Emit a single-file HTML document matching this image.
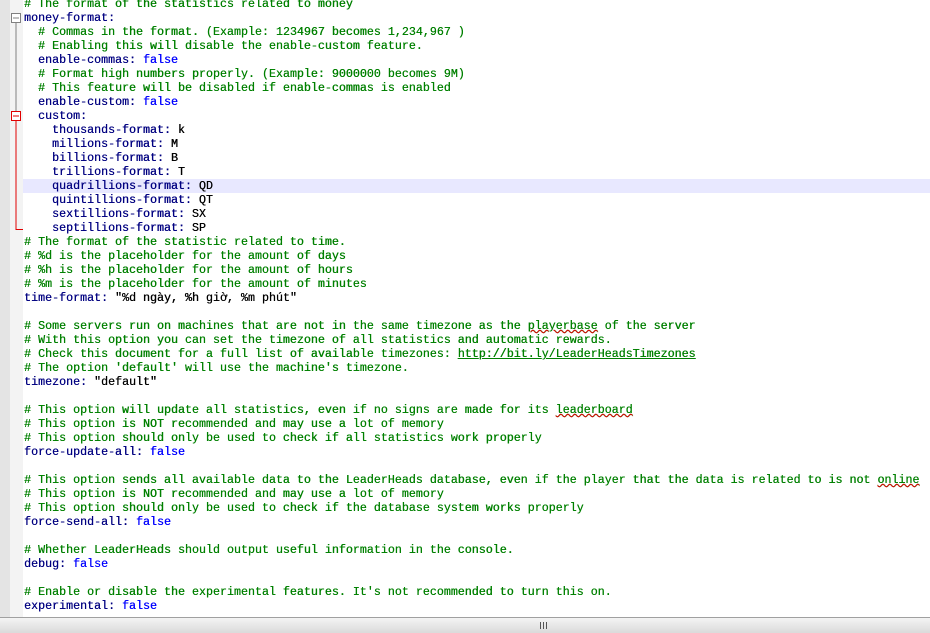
<!DOCTYPE html>
<html><head><meta charset="utf-8"><style>
html,body{margin:0;padding:0;width:930px;height:633px;overflow:hidden;background:#fff;}
.gut{position:absolute;left:0;top:0;width:10px;height:618px;background:#e4e4e4;}
.fold{position:absolute;left:10px;top:0;width:13px;height:618px;background:#f3f3f3;}
.hl{position:absolute;left:23px;top:179px;width:907px;height:14px;background:#e8e8ff;}
pre{position:absolute;left:24px;top:-3px;margin:0;font-family:"Liberation Mono",monospace;font-size:11.67px;line-height:14px;color:#000;text-shadow:0.3px 0 0 currentColor;}
.c{color:#008000}.k{color:#000080}.b{color:#0000ff}
.u{text-decoration:underline}
.w{text-decoration:underline wavy #e00000;text-decoration-thickness:1px;text-underline-offset:0px}
.sb{position:absolute;left:0;top:617px;width:930px;height:16px;background:linear-gradient(#f4f4f4,#dadada);border-top:1px solid #a0a0a0;box-sizing:border-box;}
.grip{position:absolute;left:540px;top:4px;width:8px;height:7px;background:repeating-linear-gradient(90deg,#555 0 1px,transparent 1px 3px);}
</style></head><body>
<div class="gut"></div><div class="fold"></div>
<div class="hl"></div>
<svg style="position:absolute;left:0;top:0" width="30" height="240">
<rect x="11.5" y="13.5" width="9" height="9" fill="#fff" stroke="#808080"/>
<line x1="13" y1="18" x2="19" y2="18" stroke="#808080"/>
<line x1="16" y1="23" x2="16" y2="112" stroke="#808080"/>
<rect x="11.5" y="111.5" width="9" height="9" fill="#fff" stroke="#e00000"/>
<line x1="13" y1="116" x2="19" y2="116" stroke="#e00000"/>
<line x1="16" y1="121" x2="16" y2="229.5" stroke="#e00000"/>
<line x1="15.5" y1="229.5" x2="23" y2="229.5" stroke="#e00000"/>
</svg>
<pre><span class="c"># The format of the statistics related to money</span>
<span class="k">money-format:</span>
  <span class="c"># Commas in the format. (Example: 1234967 becomes 1,234,967 )</span>
  <span class="c"># Enabling this will disable the enable-custom feature.</span>
  <span class="k">enable-commas:</span> <span class="b">false</span>
  <span class="c"># Format high numbers properly. (Example: 9000000 becomes 9M)</span>
  <span class="c"># This feature will be disabled if enable-commas is enabled</span>
  <span class="k">enable-custom:</span> <span class="b">false</span>
  <span class="k">custom:</span>
    <span class="k">thousands-format:</span> k
    <span class="k">millions-format:</span> M
    <span class="k">billions-format:</span> B
    <span class="k">trillions-format:</span> T
    <span class="k">quadrillions-format:</span> QD
    <span class="k">quintillions-format:</span> QT
    <span class="k">sextillions-format:</span> SX
    <span class="k">septillions-format:</span> SP
<span class="c"># The format of the statistic related to time.</span>
<span class="c"># %d is the placeholder for the amount of days</span>
<span class="c"># %h is the placeholder for the amount of hours</span>
<span class="c"># %m is the placeholder for the amount of minutes</span>
<span class="k">time-format:</span> "%d ngày, %h giờ, %m phút"

<span class="c"># Some servers run on machines that are not in the same timezone as the <span class="w">playerbase</span> of the server</span>
<span class="c"># With this option you can set the timezone of all statistics and automatic rewards.</span>
<span class="c"># Check this document for a full list of available timezones: <span class="u">http://bit.ly/LeaderHeadsTimezones</span></span>
<span class="c"># The option 'default' will use the machine's timezone.</span>
<span class="k">timezone:</span> "default"

<span class="c"># This option will update all statistics, even if no signs are made for its <span class="w">leaderboard</span></span>
<span class="c"># This option is NOT recommended and may use a lot of memory</span>
<span class="c"># This option should only be used to check if all statistics work properly</span>
<span class="k">force-update-all:</span> <span class="b">false</span>

<span class="c"># This option sends all available data to the LeaderHeads database, even if the player that the data is related to is not <span class="w">online</span></span>
<span class="c"># This option is NOT recommended and may use a lot of memory</span>
<span class="c"># This option should only be used to check if the database system works properly</span>
<span class="k">force-send-all:</span> <span class="b">false</span>

<span class="c"># Whether LeaderHeads should output useful information in the console.</span>
<span class="k">debug:</span> <span class="b">false</span>

<span class="c"># Enable or disable the experimental features. It's not recommended to turn this on.</span>
<span class="k">experimental:</span> <span class="b">false</span></pre>
<div class="sb"><div class="grip"></div></div>
</body></html>
